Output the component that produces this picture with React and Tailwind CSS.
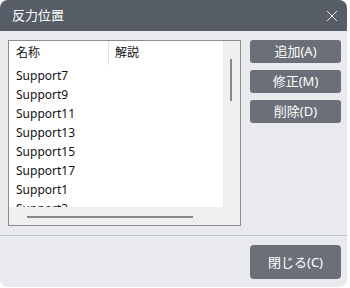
import { X } from "lucide-react";

const rows = ["Support7", "Support9", "Support11", "Support13", "Support15", "Support17", "Support1", "Support3"];

const font = { fontFamily: '"Noto Sans", "Noto Sans CJK JP", sans-serif' };

function SideButton({ children }) {
    return (
        <button className="h-[23px] w-[91px] rounded-[3px] bg-[#6b7078] text-[13px] text-white flex items-center justify-center leading-none">
            {children}
        </button>
    );
}

export default function App() {
    return (
        <div className="w-[350px] h-[288px] bg-white" style={font}>
            <div className="w-[347px] h-[287px] rounded-[8px] overflow-hidden bg-[#e9eaed] flex flex-col">
                {/* Title bar */}
                <div className="h-[31px] bg-[#565d66] flex items-center justify-between pl-[12px] pr-[6px] shrink-0">
                    <span className="text-[13px] text-white leading-none">反力位置</span>
                    <X size={18} strokeWidth={1.2} className="text-white" />
                </div>

                {/* Body */}
                <div className="flex gap-[9px] pt-[9px] px-[8px]">
                    <div className="w-[233px] h-[186px] border border-[#8c8c8c] flex flex-col">
                        <div className="flex h-[166px]">
                            <div className="w-[214px] bg-white overflow-hidden text-[12px] text-[#111]">
                                <div className="h-[24px] flex items-center">
                                    <div className="w-[100px] h-full flex items-center pl-[7px] border-r border-[#e4e4e4]">名称</div>
                                    <div className="pl-[6px]">解説</div>
                                </div>
                                <div className="pt-[1px]">
                                    {rows.map((r) => (
                                        <div key={r} className="h-[19px] flex items-center pl-[7px]">{r}</div>
                                    ))}
                                </div>
                            </div>
                            <div className="w-[17px] bg-[#efefef] pt-[18px] pl-[7px]">
                                <div className="w-[2px] h-[42px] bg-[#888]" />
                            </div>
                        </div>
                        <div className="h-[18px] bg-[#efefef] pl-[18px] pt-[9px]">
                            <div className="w-[166px] h-[2px] bg-[#888]" />
                        </div>
                    </div>
                    <div className="flex flex-col gap-[7px]">
                        <SideButton>追加(A)</SideButton>
                        <SideButton>修正(M)</SideButton>
                        <SideButton>削除(D)</SideButton>
                    </div>
                </div>

                {/* Footer */}
                <div className="mt-[9px] h-px bg-[#bfc4ca]" />
                <div className="flex justify-end pt-[9px] pr-[6px]">
                    <button className="h-[34px] w-[91px] rounded-[4px] bg-[#6b7078] text-[13px] text-white flex items-center justify-center leading-none">
                        閉じる(C)
                    </button>
                </div>
            </div>
        </div>
    );
}
